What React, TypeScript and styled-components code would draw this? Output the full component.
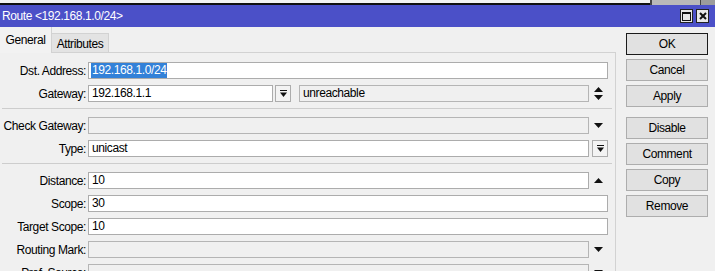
import React from 'react';
import styled, { createGlobalStyle } from 'styled-components';

const GlobalStyle = createGlobalStyle`
  html, body {
    margin: 0;
    padding: 0;
    background: #f0f0f0;
  }
  body {
    font-family: "Liberation Sans", Arial, sans-serif;
    font-size: 12px;
    letter-spacing: -0.4px;
    color: #000;
  }
`;

const Screen = styled.div`
  width: 715px;
  height: 271px;
  overflow: hidden;
  background: #f0f0f0;
`;

// strip of the window behind this one
const Backdrop = styled.div`
  display: flex;
  height: 5px;
  background: #f4f4f4;
`;

const BackdropEdge = styled.div`
  flex: 1;
  border-bottom: 2px solid #111;
`;

const BackdropButtons = styled.div`
  width: 48px;
  border-left: 2px solid #444;
  border-right: 1px solid #444;
  background: #b9b9b9;
`;

const BackdropRest = styled.div`
  width: 14px;
  background: #9c9c9c;
`;

const TitleBar = styled.div`
  display: flex;
  align-items: center;
  height: 22px;
  padding: 0 6px 0 2px;
  background: #4b50c8;
  color: #fff;
`;

const Title = styled.span`
  flex: 1;
  white-space: nowrap;
`;

const TitleButton = styled.div`
  display: flex;
  align-items: center;
  justify-content: center;
  width: 11px;
  height: 12px;
  margin-left: 3px;
  background: #e8e8e8;
  border: 1px solid #222;
`;

const Body = styled.div`
  display: flex;
`;

const Main = styled.div`
  width: 616px;
  display: flex;
  flex-direction: column;
`;

const TabBar = styled.div`
  display: flex;
  align-items: flex-end;
  height: 26px;
`;

const Tab = styled.div<{ $active?: boolean }>`
  box-sizing: border-box;
  display: flex;
  align-items: center;
  justify-content: center;
  width: ${p => (p.$active ? '52px' : '57px')};
  height: ${p => (p.$active ? '26px' : '20px')};
  padding-top: ${p => (p.$active ? '0' : '1px')};
  background: ${p => (p.$active ? '#f2f2f2' : '#e3e3e3')};
  border-right: 1px solid #d2d2d2;
  border-top: ${p => (p.$active ? 'none' : '1px solid #d2d2d2')};
  border-bottom: ${p => (p.$active ? 'none' : '1px solid #d2d2d2')};
  white-space: nowrap;
`;

const TabFill = styled.div`
  flex: 1;
  height: 1px;
  background: #d2d2d2;
`;

const Panel = styled.div`
  display: flex;
  flex-direction: column;
  gap: 6px;
  height: 240px;
  padding: 9px 0 0 0;
  border-right: 1px solid #d2d2d2;
`;

const Row = styled.div`
  display: grid;
  grid-template-columns: 88px 1fr;
  align-items: center;
  height: 17px;
  padding-right: 7px;
`;

const Label = styled.label`
  text-align: right;
  padding-right: 2px;
  white-space: nowrap;
`;

const Fields = styled.div`
  display: flex;
  align-items: center;
  height: 17px;
`;

const Field = styled.div<{ $readonly?: boolean; $width?: number }>`
  box-sizing: border-box;
  ${p => (p.$width ? `width: ${p.$width}px;` : 'flex: 1;')}
  height: 17px;
  padding: 0 3px;
  line-height: 15px;
  background: ${p => (p.$readonly ? '#f0f0f0' : '#fff')};
  border: 1px solid ${p => (p.$readonly ? '#b5b5b5' : '#acacac')};
  white-space: nowrap;
  overflow: hidden;
`;

const Selected = styled.span`
  display: inline-block;
  margin-left: -1px;
  padding: 0 1px;
  background: #3381d8;
  color: #fff;
`;

const Slot = styled.div`
  display: flex;
  align-items: center;
  justify-content: center;
  width: 19px;
  height: 17px;
`;

const DropButton = styled.div<{ $gap?: number }>`
  box-sizing: border-box;
  display: flex;
  align-items: center;
  justify-content: center;
  width: 16px;
  height: 17px;
  margin-left: ${p => p.$gap ?? 3}px;
  background: #f3f3f3;
  border: 1px solid #acacac;
`;

const Status = styled(Field)`
  margin-left: 8px;
`;

const Separator = styled.div`
  height: 2px;
  margin: 0 3px 0 2px;
  border-top: 1px solid #cdcdcd;
`;

const Buttons = styled.div`
  display: flex;
  flex-direction: column;
  gap: 4px;
  margin: 6px 0 0 10px;
`;

const Button = styled.div<{ $default?: boolean; $spaced?: boolean }>`
  box-sizing: border-box;
  display: flex;
  align-items: center;
  justify-content: center;
  width: 82px;
  height: 22px;
  margin-top: ${p => (p.$spaced ? '6px' : '0')};
  background: #e1e1e1;
  border: 1px solid ${p => (p.$default ? '#1b1b1b' : '#adadad')};
`;

const ArrowDown = () => (
  <svg width="9" height="5" viewBox="0 0 9 5">
    <path d="M0 0H9L4.5 5Z" fill="#111" />
  </svg>
);

const ArrowUp = () => (
  <svg width="9" height="5" viewBox="0 0 9 5">
    <path d="M0 5H9L4.5 0Z" fill="#111" />
  </svg>
);

const UpDown = () => (
  <svg width="9" height="13" viewBox="0 0 9 13">
    <path d="M0 5H9L4.5 0Z M0 8H9L4.5 13Z" fill="#111" />
  </svg>
);

const Expand = () => (
  <svg width="7" height="7" viewBox="0 0 7 7">
    <rect x="0" y="0" width="7" height="1" fill="#111" />
    <path d="M0 2.5H7L3.5 7Z" fill="#111" />
  </svg>
);

const Maximize = () => (
  <svg width="9" height="9" viewBox="0 0 9 9">
    <rect x="0.5" y="0.5" width="8" height="8" fill="none" stroke="#111" />
    <rect x="0" y="0" width="9" height="2" fill="#111" />
  </svg>
);

const Close = () => (
  <svg width="8" height="8" viewBox="0 0 8 8">
    <path d="M1 1L7 7M7 1L1 7" stroke="#111" strokeWidth="2" />
  </svg>
);

const App: React.FC = () => {
  return (
    <Screen>
      <GlobalStyle />
      <Backdrop>
        <BackdropEdge />
        <BackdropButtons />
        <BackdropRest />
      </Backdrop>
      <TitleBar>
        <Title>Route &lt;192.168.1.0/24&gt;</Title>
        <TitleButton><Maximize /></TitleButton>
        <TitleButton><Close /></TitleButton>
      </TitleBar>
      <Body>
        <Main>
          <TabBar>
            <Tab $active>General</Tab>
            <Tab>Attributes</Tab>
            <TabFill />
          </TabBar>
          <Panel>
            <Row>
              <Label>Dst. Address:</Label>
              <Fields>
                <Field><Selected>192.168.1.0/24</Selected></Field>
              </Fields>
            </Row>
            <Row>
              <Label>Gateway:</Label>
              <Fields>
                <Field $width={185}>192.168.1.1</Field>
                <DropButton $gap={2}><Expand /></DropButton>
                <Status $readonly>unreachable</Status>
                <Slot><UpDown /></Slot>
              </Fields>
            </Row>
            <Separator />
            <Row>
              <Label>Check Gateway:</Label>
              <Fields>
                <Field $readonly />
                <Slot><ArrowDown /></Slot>
              </Fields>
            </Row>
            <Row>
              <Label>Type:</Label>
              <Fields>
                <Field>unicast</Field>
                <DropButton><Expand /></DropButton>
              </Fields>
            </Row>
            <Separator />
            <Row>
              <Label>Distance:</Label>
              <Fields>
                <Field>10</Field>
                <Slot><ArrowUp /></Slot>
              </Fields>
            </Row>
            <Row>
              <Label>Scope:</Label>
              <Fields>
                <Field>30</Field>
              </Fields>
            </Row>
            <Row>
              <Label>Target Scope:</Label>
              <Fields>
                <Field>10</Field>
              </Fields>
            </Row>
            <Row>
              <Label>Routing Mark:</Label>
              <Fields>
                <Field $readonly />
                <Slot><ArrowDown /></Slot>
              </Fields>
            </Row>
            <Row>
              <Label>Pref. Source:</Label>
              <Fields>
                <Field $readonly />
                <Slot><ArrowDown /></Slot>
              </Fields>
            </Row>
          </Panel>
        </Main>
        <Buttons>
          <Button $default>OK</Button>
          <Button>Cancel</Button>
          <Button>Apply</Button>
          <Button $spaced>Disable</Button>
          <Button>Comment</Button>
          <Button>Copy</Button>
          <Button>Remove</Button>
        </Buttons>
      </Body>
    </Screen>
  );
};

export default App;
